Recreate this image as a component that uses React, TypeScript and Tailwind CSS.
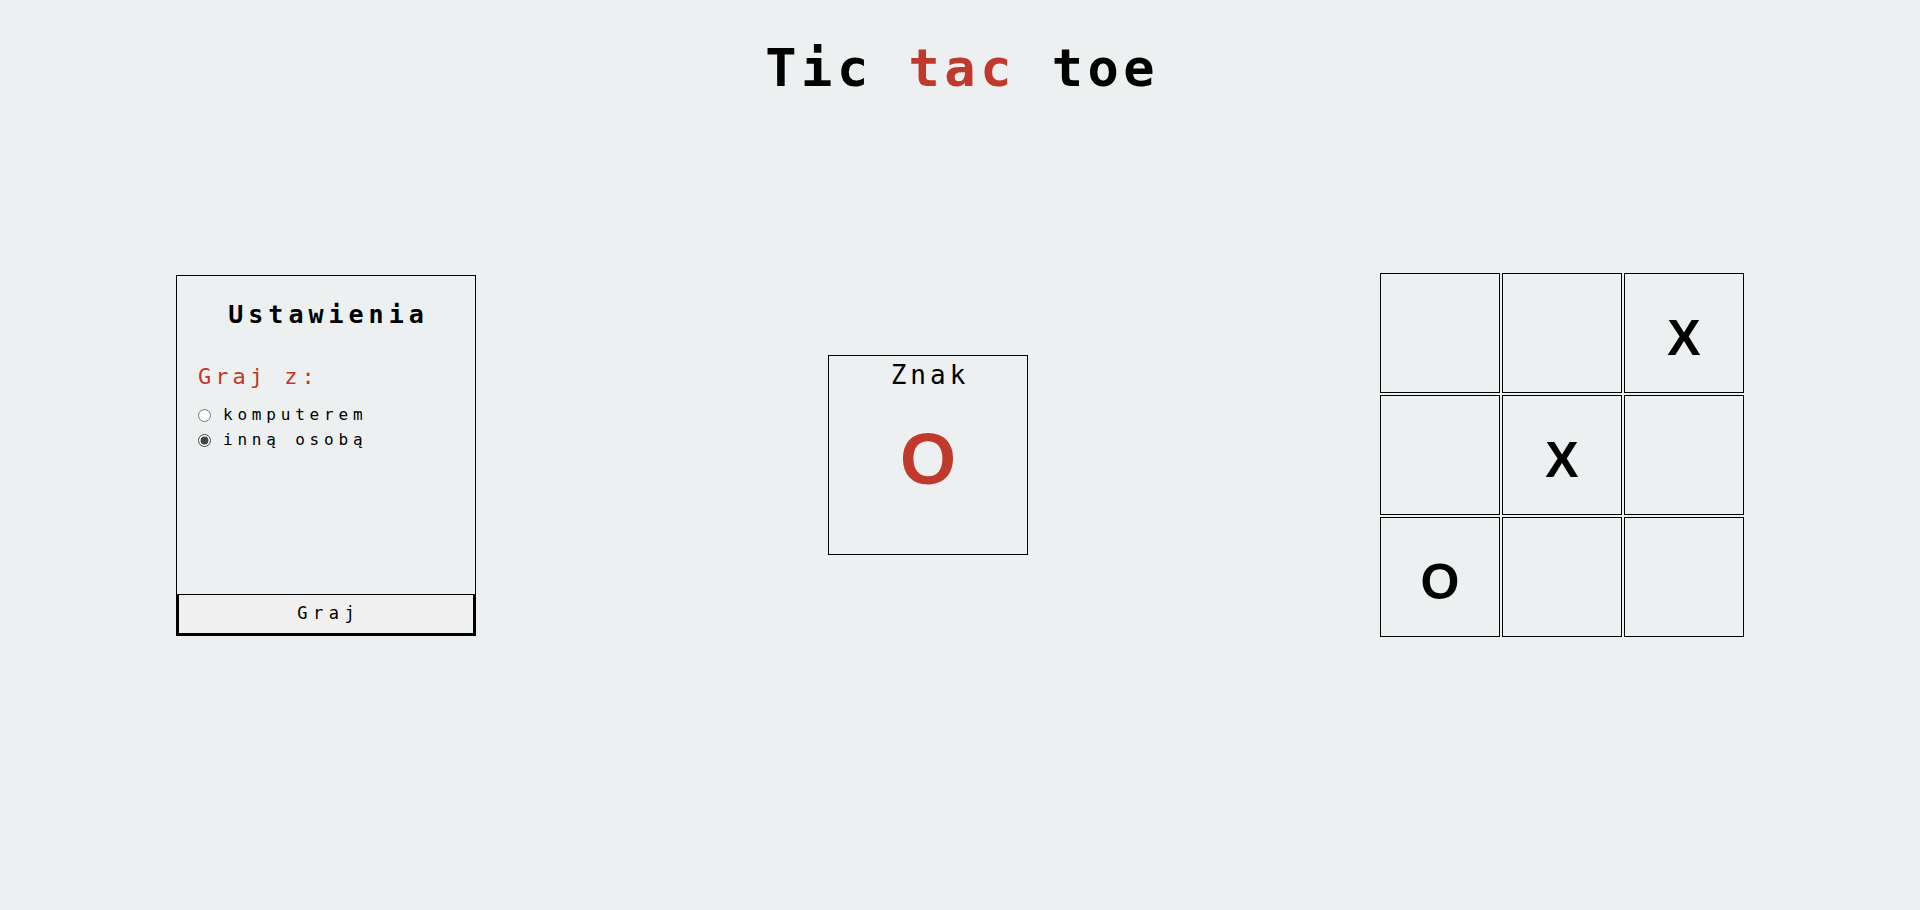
import { useState } from "react";

type Mark = "X" | "O" | "";

const board: Mark[] = ["", "", "X", "", "X", "", "O", "", ""];

export default function App() {
    const [mode, setMode] = useState("person");

    return <div className="h-screen w-full flex flex-col bg-[#ecf0f1] text-black font-['DejaVu_Sans_Mono',monospace]">
        <header className="h-[130px] pt-[42px]">
            <h1 className="text-center text-[52px] leading-none font-bold tracking-[4.5px] pl-[4.5px]">
                Tic <span className="text-[#c0392b]">tac</span> toe
            </h1>
        </header>

        <main className="flex-1 flex items-center justify-around">
            {/* settings */}
            <div className="w-[300px] h-[361px] border border-black flex flex-col">
                <div className="flex-1 px-[21px] pt-[26px]">
                    <h2 className="text-center text-[25px] leading-none font-bold tracking-[5px] pl-[5px]">
                        Ustawienia
                    </h2>
                    <p className="mt-[39px] text-[22px] leading-none text-[#c0392b] tracking-[4px]">
                        Graj z:
                    </p>
                    <div className="mt-[15px] flex flex-col">
                        <label className="h-[25px] flex items-center gap-[12px] text-[16px] tracking-[4.8px] cursor-pointer">
                            <input type="radio" name="mode" className="w-[13px] h-[13px] accent-[#444]"
                                checked={mode === "computer"} onChange={() => setMode("computer")} />
                            komputerem
                        </label>
                        <label className="h-[25px] flex items-center gap-[12px] text-[16px] tracking-[4.8px] cursor-pointer">
                            <input type="radio" name="mode" className="w-[13px] h-[13px] accent-[#444]"
                                checked={mode === "person"} onChange={() => setMode("person")} />
                            inną osobą
                        </label>
                    </div>
                </div>
                <button className="h-[41px] border-2 border-t border-black bg-[#f0f0f0] text-[17px] tracking-[5.5px] pl-[5.5px] cursor-pointer">
                    Graj
                </button>
            </div>

            {/* current sign */}
            <div className="w-[200px] h-[200px] border border-black flex flex-col items-center">
                <div className="pt-[6px] text-[26px] leading-none tracking-[4px] pl-[4px]">Znak</div>
                <div className="mt-[35px] text-[72px] leading-none font-bold text-[#c0392b] font-['Liberation_Sans',sans-serif]">
                    O
                </div>
            </div>

            {/* board */}
            <div className="grid grid-cols-3 gap-[2px]">
                {board.map((m, i) =>
                    <div key={i} className="w-[120px] h-[120px] border border-black flex items-center justify-center pt-[10px]">
                        <span className="text-[50px] leading-none font-bold font-['Liberation_Sans',sans-serif]">{m}</span>
                    </div>
                )}
            </div>
        </main>

        <div className="h-[130px]" />
    </div>
}
